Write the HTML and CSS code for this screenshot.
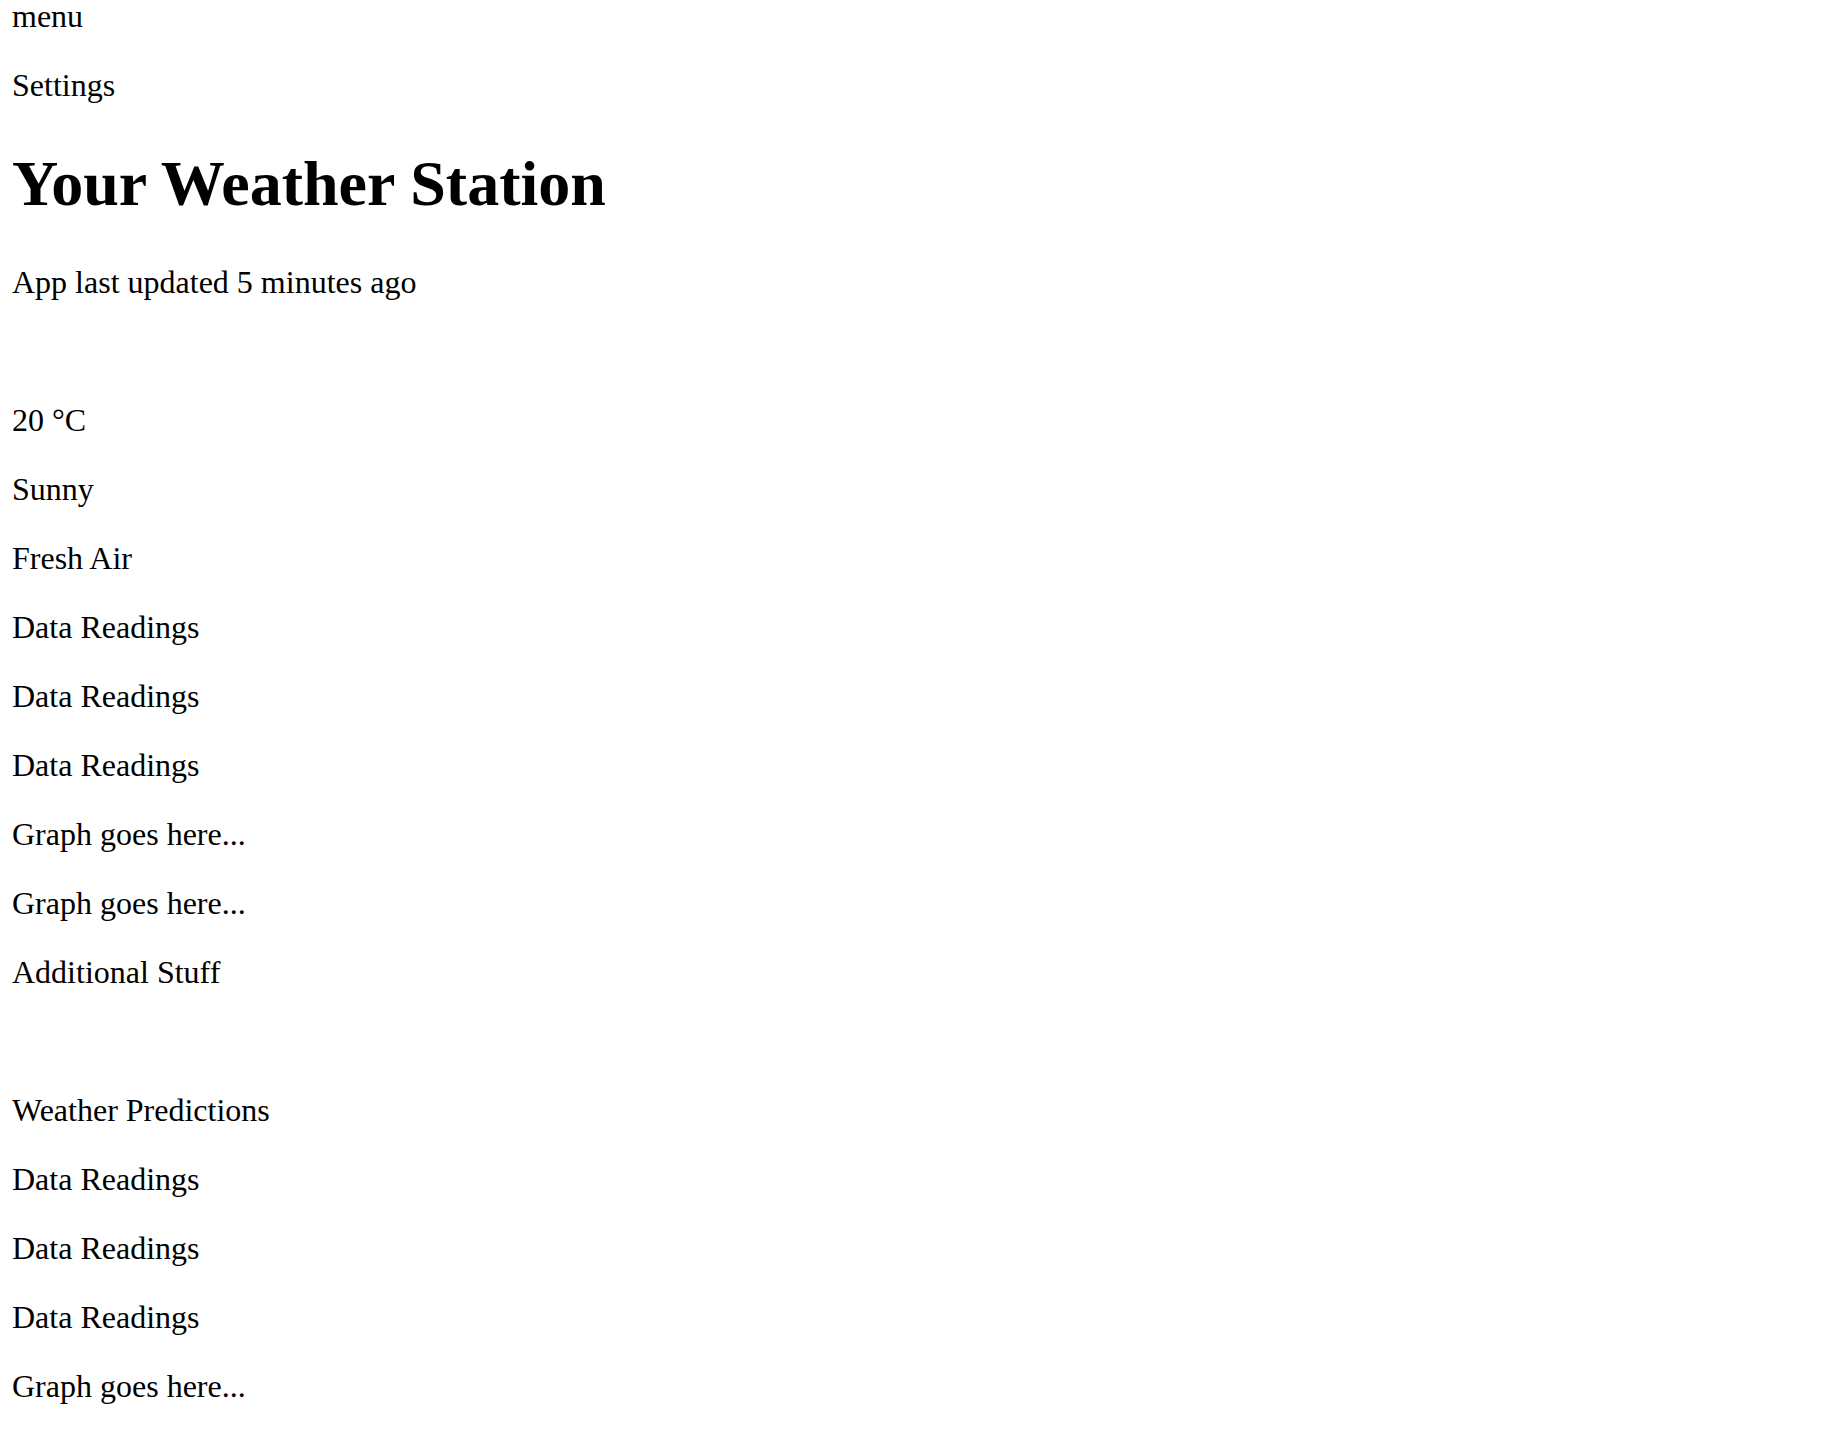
FILE: index.html
```html
<!DOCTYPE html>
<html lang="en">
<head>
<meta charset="utf-8">
<title>Your Weather Station</title>
<link rel="stylesheet" href="styles.css">
</head>
<body>
<header class="topbar">
  <p class="item">menu</p>
  <p class="item">Settings</p>
</header>
<main>
  <section class="intro">
    <h1 class="title">Your Weather Station</h1>
    <p class="item">App last updated 5 minutes ago</p>
  </section>
  <section class="panel">
    <p class="item">20 °C</p>
    <p class="item">Sunny</p>
    <p class="item">Fresh Air</p>
    <p class="item">Data Readings</p>
    <p class="item">Data Readings</p>
    <p class="item">Data Readings</p>
    <p class="item">Graph goes here...</p>
    <p class="item">Graph goes here...</p>
    <p class="item">Additional Stuff</p>
  </section>
  <section class="panel">
    <p class="item">Weather Predictions</p>
    <p class="item">Data Readings</p>
    <p class="item">Data Readings</p>
    <p class="item">Data Readings</p>
    <p class="item">Graph goes here...</p>
    <p class="item">Graph goes here...</p>
  </section>
</main>
</body>
</html>
```
FILE: styles.css
```css
html {
  font-size: 32px;
}

body {
  margin: 0 12px;
  font-family: "Liberation Serif", "Times New Roman", serif;
  font-size: 32px;
  color: #000;
  background: #fff;
}

.topbar {
  margin-top: -2px;
}

.item {
  margin: 32px 0;
}

.topbar .item:first-child {
  margin-top: 0;
}

.title {
  font-size: 64px;
  font-weight: bold;
  margin: 0.67em 0;
}

.panel {
  padding-top: 37px;
}
```
